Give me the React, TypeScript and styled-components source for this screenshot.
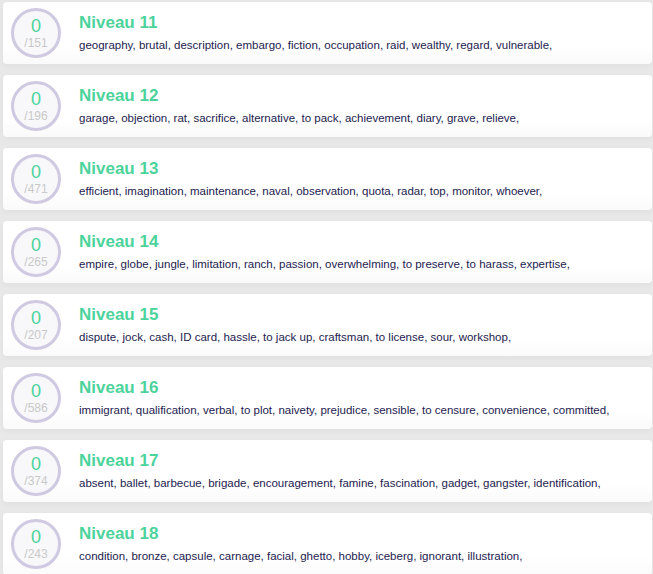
import React from 'react'
import styled, { createGlobalStyle } from 'styled-components'

const GlobalStyle = createGlobalStyle`
    body {
        margin: 0;
        background: #e8e8e8;
        font-family: "Liberation Sans", Arial, sans-serif;
    }
`

const List = styled.div`
    display: flex;
    flex-direction: column;
    gap: 11px;
    padding: 2px 1px 0 3px;
`

const Card = styled.div`
    display: flex;
    align-items: flex-start;
    gap: 18px;
    height: 62px;
    box-sizing: border-box;
    padding: 6px 8px;
    background: linear-gradient(#fff 70%, #fafafa);
    border-radius: 4px;
    box-shadow: 0 2px 6px rgba(0, 0, 0, 0.04);
`

const Score = styled.div`
    flex: none;
    width: 50px;
    height: 50px;
    box-sizing: border-box;
    border: 3px solid #cfc9e1;
    border-radius: 50%;
    background: #f8f8fa;
    display: flex;
    flex-direction: column;
    align-items: center;
    justify-content: center;
    gap: 2px;
`

const Known = styled.span`
    font-size: 18px;
    line-height: 18px;
    color: #4cd39b;
`

const Total = styled.span`
    font-size: 12px;
    line-height: 13px;
    color: #c9c9c9;
`

const Body = styled.div`
    display: flex;
    flex-direction: column;
    padding-top: 4px;
`

const Title = styled.h2`
    margin: 0;
    font-size: 17px;
    line-height: 22px;
    font-weight: bold;
    color: #4cd39b;
`

const Words = styled.p`
    margin: 4px 0 0;
    font-size: 11.5px;
    line-height: 14px;
    color: #1d1b4f;
`

const levels = [
    { n: 11, total: 151, words: 'geography, brutal, description, embargo, fiction, occupation, raid, wealthy, regard, vulnerable,' },
    { n: 12, total: 196, words: 'garage, objection, rat, sacrifice, alternative, to pack, achievement, diary, grave, relieve,' },
    { n: 13, total: 471, words: 'efficient, imagination, maintenance, naval, observation, quota, radar, top, monitor, whoever,' },
    { n: 14, total: 265, words: 'empire, globe, jungle, limitation, ranch, passion, overwhelming, to preserve, to harass, expertise,' },
    { n: 15, total: 207, words: 'dispute, jock, cash, ID card, hassle, to jack up, craftsman, to license, sour, workshop,' },
    { n: 16, total: 586, words: 'immigrant, qualification, verbal, to plot, naivety, prejudice, sensible, to censure, convenience, committed,' },
    { n: 17, total: 374, words: 'absent, ballet, barbecue, brigade, encouragement, famine, fascination, gadget, gangster, identification,' },
    { n: 18, total: 243, words: 'condition, bronze, capsule, carnage, facial, ghetto, hobby, iceberg, ignorant, illustration,' },
]

const App: React.FC = () => {
    return (
        <>
            <GlobalStyle />
            <List>
                {levels.map((l) => (
                    <Card key={l.n}>
                        <Score>
                            <Known>0</Known>
                            <Total>/{l.total}</Total>
                        </Score>
                        <Body>
                            <Title>Niveau {l.n}</Title>
                            <Words>{l.words}</Words>
                        </Body>
                    </Card>
                ))}
            </List>
        </>
    )
}

export default App
